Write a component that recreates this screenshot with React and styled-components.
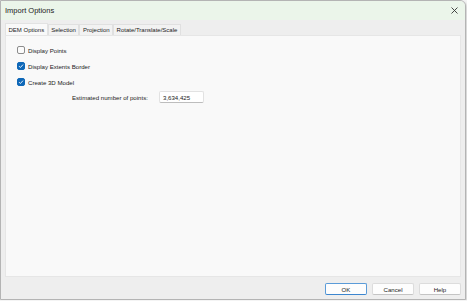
import React, { useState } from "react";
import styled, { createGlobalStyle } from "styled-components";

const GlobalStyle = createGlobalStyle`
  html, body {
    margin: 0;
    padding: 0;
    background: #f4f4f4;
  }
  body {
    font-family: "Liberation Sans", Arial, sans-serif;
    color: #1b1b1b;
  }
`;

// Dialog frame
const Window = styled.div`
  box-sizing: border-box;
  width: 466px;
  height: 300px;
  display: flex;
  flex-direction: column;
  border: 1px solid #b4b4b4;
  border-radius: 0 6px 0 0;
  overflow: hidden;
  background: #eeeeee;
  box-shadow: 1px 1px 2px rgba(0, 0, 0, 0.15);
`;

const TitleBar = styled.div`
  height: 19px;
  display: flex;
  align-items: center;
  justify-content: space-between;
  padding: 0 6px 0 4px;
  background: #ebf5ea;
  font-size: 7.5px;
`;

const CloseButton = styled.button`
  border: none;
  background: none;
  padding: 0;
  width: 9px;
  height: 9px;
  display: flex;
  align-items: center;
  justify-content: center;
  cursor: pointer;
`;

const Body = styled.div`
  flex: 1;
  display: flex;
  flex-direction: column;
  padding: 3px 4px 0 4px;
`;

const TabRow = styled.div`
  display: flex;
  align-items: flex-end;
  height: 12px;
`;

const Tab = styled.div`
  box-sizing: border-box;
  height: ${({ $active }) => ($active ? "12px" : "11px")};
  padding: 0 2.5px;
  display: flex;
  align-items: center;
  font-size: 6px;
  background: ${({ $active }) => ($active ? "#f9f9f9" : "#f2f2f2")};
  border: 1px solid ${({ $active }) => ($active ? "#e2e2e2" : "#e0e0e0")};
  border-bottom: none;
  cursor: default;
`;

const Panel = styled.div`
  flex: 1;
  background: #f9f9f9;
  border: 1px solid #e6e6e6;
  padding: 6px 0 0 11px;
  display: flex;
  flex-direction: column;
`;

const CheckRow = styled.label`
  display: flex;
  align-items: center;
  gap: 3px;
  height: 16px;
  font-size: 6.1px;
  cursor: default;
`;

const Box = styled.span`
  box-sizing: border-box;
  width: 8px;
  height: 8px;
  border-radius: 2px;
  display: flex;
  align-items: center;
  justify-content: center;
  background: ${({ $checked }) => ($checked ? "#0f68b8" : "#fbfbfb")};
  border: 1px solid ${({ $checked }) => ($checked ? "#0f68b8" : "#8c8c8c")};
`;

const FieldRow = styled.div`
  display: flex;
  align-items: center;
  margin-top: 1px;
  padding-left: 55px;
  font-size: 6.1px;
`;

const FieldLabel = styled.span`
  width: 87px;
`;

const Input = styled.div`
  box-sizing: border-box;
  width: 45px;
  height: 12px;
  background: #ffffff;
  border: 1px solid #e2e2e2;
  border-bottom-color: #bdbdbd;
  border-radius: 2px;
  padding-left: 3px;
  display: flex;
  align-items: center;
`;

const Footer = styled.div`
  box-sizing: border-box;
  height: 22px;
  display: flex;
  justify-content: flex-end;
  align-items: flex-start;
  gap: 5px;
  padding: 6px 0 0 0;
`;

const Button = styled.button`
  box-sizing: border-box;
  width: 42px;
  height: 12px;
  padding: 0;
  font-family: inherit;
  font-size: 6.1px;
  color: #1b1b1b;
  background: #fdfdfd;
  border: 1px solid ${({ $primary }) => ($primary ? "#5a9bd8" : "#dcdcdc")};
  border-bottom-color: ${({ $primary }) => ($primary ? "#3c86cf" : "#c4c4c4")};
  border-radius: 2px;
  cursor: default;
`;

const Check = ({ checked, label, onToggle }) => (
  <CheckRow onClick={onToggle}>
    <Box $checked={checked}>
      {checked && (
        <svg width="6" height="6" viewBox="0 0 6 6">
          <path d="M1 3.1 L2.4 4.5 L5 1.6" fill="none" stroke="#fff" strokeWidth="0.9" />
        </svg>
      )}
    </Box>
    {label}
  </CheckRow>
);

const tabs = ["DEM Options", "Selection", "Projection", "Rotate/Translate/Scale"];

const App = () => {
  const [activeTab, setActiveTab] = useState(0);
  const [opts, setOpts] = useState({ points: false, border: true, model: true });

  const toggle = (key) => setOpts((prev) => ({ ...prev, [key]: !prev[key] }));

  return (
    <>
      <GlobalStyle />
      <Window>
        <TitleBar>
          <span>Import Options</span>
          <CloseButton aria-label="Close">
            <svg width="7" height="7" viewBox="0 0 7 7">
              <path d="M0.5 0.5 L6.5 6.5 M6.5 0.5 L0.5 6.5" stroke="#333" strokeWidth="0.9" />
            </svg>
          </CloseButton>
        </TitleBar>
        <Body>
          <TabRow>
            {tabs.map((t, i) => (
              <Tab key={t} $active={i === activeTab} onClick={() => setActiveTab(i)}>
                {t}
              </Tab>
            ))}
          </TabRow>
          <Panel>
            <Check checked={opts.points} label="Display Points" onToggle={() => toggle("points")} />
            <Check checked={opts.border} label="Display Extents Border" onToggle={() => toggle("border")} />
            <Check checked={opts.model} label="Create 3D Model" onToggle={() => toggle("model")} />
            <FieldRow>
              <FieldLabel>Estimated number of points:</FieldLabel>
              <Input>3,634,425</Input>
            </FieldRow>
          </Panel>
          <Footer>
            <Button $primary>OK</Button>
            <Button>Cancel</Button>
            <Button>Help</Button>
          </Footer>
        </Body>
      </Window>
    </>
  );
};

export default App;
